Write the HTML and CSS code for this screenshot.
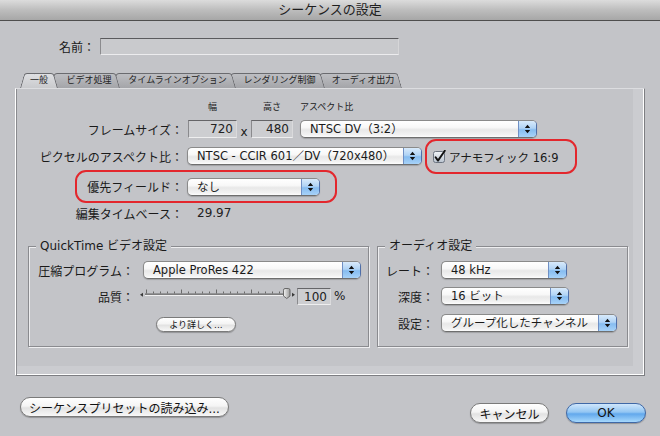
FILE: index.html
```html
<!DOCTYPE html>
<html lang="ja">
<head>
<meta charset="utf-8">
<title>シーケンスの設定</title>
<link rel="stylesheet" href="styles.css">
</head>
<body>
<div class="titlebar">シーケンスの設定</div>

<div class="name-row">
  <span class="name-label">名前：</span>
  <div class="name-field"></div>
</div>

<div class="tabs">
  <div class="tab selected t1">一般</div>
  <div class="tab t2">ビデオ処理</div>
  <div class="tab t3">タイムラインオプション</div>
  <div class="tab t4">レンダリング制御</div>
  <div class="tab t5">オーディオ出力</div>
</div>

<div class="panel">
  <div class="content">
    <div class="head-row">
      <span class="h-spacer"></span>
      <span class="h-w">幅</span>
      <span class="h-h">高さ</span>
      <span class="h-a">アスペクト比</span>
    </div>

    <div class="row">
      <span class="label">フレームサイズ：</span>
      <div class="numfield f720">720</div>
      <span class="times">x</span>
      <div class="numfield f480">480</div>
      <div class="popup p-aspect">
        <span class="ptext">NTSC DV（3:2）</span>
        <span class="parrows"><svg width="7" height="10" viewBox="0 0 7 10"><path d="M3.5 0.8 L6.2 4 L0.8 4 Z M0.8 6 L6.2 6 L3.5 9.2 Z" fill="#111"/></svg></span>
      </div>
    </div>

    <div class="row row-pixel">
      <span class="label">ピクセルのアスペクト比：</span>
      <div class="popup p-pixel">
        <span class="ptext">NTSC - CCIR 601／DV（720x480）</span>
        <span class="parrows"><svg width="7" height="10" viewBox="0 0 7 10"><path d="M3.5 0.8 L6.2 4 L0.8 4 Z M0.8 6 L6.2 6 L3.5 9.2 Z" fill="#111"/></svg></span>
      </div>
      <div class="mark anamorphic">
        <svg class="checkbox" width="14" height="14" viewBox="0 0 14 14">
          <defs><linearGradient id="cbg" x1="0" y1="0" x2="0" y2="1"><stop offset="0" stop-color="#f2f5f9"/><stop offset="1" stop-color="#b9c3cf"/></linearGradient></defs>
          <rect x="0.5" y="1.5" width="11" height="11" rx="2" fill="url(#cbg)" stroke="#6c7480"/>
          <path d="M2.6 7.2 L5 10.6 L11.8 0.8" stroke="#111" stroke-width="1.9" fill="none" stroke-linecap="round" stroke-linejoin="round"/>
        </svg>
        <span class="cblabel">アナモフィック 16:9</span>
      </div>
    </div>

    <div class="mark priority">
      <span class="label plabel">優先フィールド：</span>
      <div class="popup p-priority">
        <span class="ptext">なし</span>
        <span class="parrows"><svg width="7" height="10" viewBox="0 0 7 10"><path d="M3.5 0.8 L6.2 4 L0.8 4 Z M0.8 6 L6.2 6 L3.5 9.2 Z" fill="#111"/></svg></span>
      </div>
    </div>

    <div class="row row-tb">
      <span class="label">編集タイムベース：</span>
      <span class="tbvalue">29.97</span>
    </div>

    <div class="groups">
      <div class="group qt">
        <div class="gtitle">QuickTime ビデオ設定</div>
        <div class="grow g-comp">
          <span class="glabel qlabel">圧縮プログラム：</span>
          <div class="popup p-comp">
            <span class="ptext">Apple ProRes 422</span>
            <span class="parrows"><svg width="7" height="10" viewBox="0 0 7 10"><path d="M3.5 0.8 L6.2 4 L0.8 4 Z M0.8 6 L6.2 6 L3.5 9.2 Z" fill="#111"/></svg></span>
          </div>
        </div>
        <div class="grow g-quality">
          <span class="glabel qlabel">品質：</span>
          <svg class="slider" width="158" height="18" viewBox="0 0 158 18">
            <defs><linearGradient id="thg" x1="0" y1="0" x2="1" y2="0"><stop offset="0" stop-color="#f4f4f4"/><stop offset="1" stop-color="#9a9a9a"/></linearGradient></defs>
            <path d="M2 7.8 L5 5.8 L5 9.8 Z" fill="#3a3a3a"/>
            <rect x="7" y="6.5" width="142" height="1.4" fill="#666"/>
            <rect x="7" y="7.9" width="142" height="1" fill="#f6f6f6"/>
            <g fill="#6a6a6a">
              <rect x="8" y="2.5" width="1" height="4"/>
              <rect x="15" y="4.5" width="1" height="2"/>
              <rect x="22" y="4.5" width="1" height="2"/>
              <rect x="29" y="4.5" width="1" height="2"/>
              <rect x="36" y="4.5" width="1" height="2"/>
              <rect x="43" y="2.5" width="1" height="4"/>
              <rect x="50" y="4.5" width="1" height="2"/>
              <rect x="57" y="4.5" width="1" height="2"/>
              <rect x="64" y="4.5" width="1" height="2"/>
              <rect x="71" y="4.5" width="1" height="2"/>
              <rect x="78" y="2.5" width="1" height="4"/>
              <rect x="85" y="4.5" width="1" height="2"/>
              <rect x="92" y="4.5" width="1" height="2"/>
              <rect x="99" y="4.5" width="1" height="2"/>
              <rect x="106" y="4.5" width="1" height="2"/>
              <rect x="113" y="2.5" width="1" height="4"/>
              <rect x="120" y="4.5" width="1" height="2"/>
              <rect x="127" y="4.5" width="1" height="2"/>
              <rect x="134" y="4.5" width="1" height="2"/>
              <rect x="141" y="4.5" width="1" height="2"/>
            </g>
            <path d="M145.5 3.2 Q145.5 1.5 147 1.5 L150.5 1.5 Q152 1.5 152 3.2 L152 9 L148.75 11.5 L145.5 9 Z" fill="url(#thg)" stroke="#5e5e5e" stroke-width="0.9"/>
            <path d="M157 7.8 L154 5.8 L154 9.8 Z" fill="#3a3a3a"/>
          </svg>
          <div class="numfield f100">100</div>
          <span class="pct">%</span>
        </div>
        <div class="grow g-more">
          <div class="btn small">より詳しく...</div>
        </div>
      </div>

      <div class="group audio">
        <div class="gtitle">オーディオ設定</div>
        <div class="grow a1">
          <span class="glabel alabel">レート：</span>
          <div class="popup p-rate">
            <span class="ptext">48 kHz</span>
            <span class="parrows"><svg width="7" height="10" viewBox="0 0 7 10"><path d="M3.5 0.8 L6.2 4 L0.8 4 Z M0.8 6 L6.2 6 L3.5 9.2 Z" fill="#111"/></svg></span>
          </div>
        </div>
        <div class="grow a2">
          <span class="glabel alabel">深度：</span>
          <div class="popup p-depth">
            <span class="ptext">16 ビット</span>
            <span class="parrows"><svg width="7" height="10" viewBox="0 0 7 10"><path d="M3.5 0.8 L6.2 4 L0.8 4 Z M0.8 6 L6.2 6 L3.5 9.2 Z" fill="#111"/></svg></span>
          </div>
        </div>
        <div class="grow a3">
          <span class="glabel alabel">設定：</span>
          <div class="popup p-config">
            <span class="ptext">グループ化したチャンネル</span>
            <span class="parrows"><svg width="7" height="10" viewBox="0 0 7 10"><path d="M3.5 0.8 L6.2 4 L0.8 4 Z M0.8 6 L6.2 6 L3.5 9.2 Z" fill="#111"/></svg></span>
          </div>
        </div>
      </div>
    </div>
  </div>
</div>

<div class="bottom">
  <div class="btn preset">シーケンスプリセットの読み込み...</div>
  <div class="right-buttons">
    <div class="btn cancel">キャンセル</div>
    <div class="btn ok">OK</div>
  </div>
</div>
</body>
</html>
```

FILE: styles.css
```css
* { box-sizing: border-box; }
html, body { margin: 0; padding: 0; }
body {
  width: 660px;
  height: 436px;
  overflow: hidden;
  background: #c3c4c8;
  font-family: "DejaVu Sans", "Noto Sans CJK JP", sans-serif;
  font-size: 12px;
  color: #1a1a1a;
}

/* title bar */
.titlebar {
  height: 21px;
  line-height: 20px;
  text-align: center;
  font-size: 13px;
  color: #1e1e1e;
  background: linear-gradient(#dcdcdc, #bdbdbd 50%, #a7a7a7);
  border-bottom: 1px solid #4e4e4e;
}

/* name */
.name-row {
  display: flex;
  align-items: center;
  height: 17px;
  margin-top: 17px;
}
.name-label { width: 95px; text-align: right; }
.name-field {
  margin-left: 5px;
  width: 299px;
  height: 17px;
  background: #c9cacd;
  border: 1px solid #8b8b8e;
  border-top-color: #5a5a5d;
  border-bottom-color: #ececee;
  border-right-color: #d6d6d8;
}

/* tabs */
.tabs {
  display: flex;
  height: 15px;
  margin-top: 18px;
  margin-left: 20px;
}
.tab {
  position: relative;
  height: 15px;
  line-height: 15px;
  font-size: 9px;
  color: #1e1e1e;
  text-align: center;
  padding-left: 8px;
  margin-left: -8px;
  white-space: nowrap;
}
.tab::before,
.tab::after {
  content: "";
  position: absolute;
  top: 0;
  bottom: 0;
  width: 50%;
  z-index: -1;
  border-top: 1px solid #6a6b6f;
  background: linear-gradient(#bdbec2, #a4a5a9);
}
.tab::before {
  left: 0;
  border-left: 1px solid #6a6b6f;
  border-top-left-radius: 3px;
  transform: skewX(-16deg);
  transform-origin: bottom left;
}
.tab::after {
  right: 0;
  border-right: 1px solid #6a6b6f;
  border-top-right-radius: 3px;
  transform: skewX(16deg);
  transform-origin: bottom right;
}
.tab.selected::before,
.tab.selected::after { background: linear-gradient(#dedfe2, #c9cacd); }
.t1 { width: 38px; margin-left: 0; padding-left: 0; z-index: 10; }
.t2 { width: 70px; z-index: 5; }
.t3 { width: 123px; z-index: 4; }
.t4 { width: 97px; z-index: 3; }
.t5 { width: 86px; z-index: 2; }

/* panel */
.panel {
  margin-left: 15px;
  width: 630px;
  height: 288px;
  background: #cbccd0;
  border-top: 1px solid #dcdde0;
  border-left: 1px solid #ffffff;
  border-right: 1px solid #7d7e82;
  border-bottom: 1px solid #7d7e82;
  box-shadow: inset 1px 0 0 #8a8b8f, inset -1px -1px 0 #ffffff;
  padding: 0 11px 9px 1px;
}
.content {
  height: 100%;
  background: #c3c4c8;
  display: flex;
  flex-direction: column;
  align-items: flex-start;
}

.head-row {
  display: flex;
  height: 11px;
  line-height: 11px;
  margin-top: 13px;
  font-size: 9px;
}
.h-spacer { width: 171px; }
.h-w { width: 49px; text-align: center; }
.h-h { width: 42px; margin-left: 14px; text-align: center; }
.h-a { margin-left: 7px; }

.row {
  display: flex;
  align-items: center;
  height: 18px;
  margin-top: 7px;
}
.row-pixel { margin-top: 9px; }
.label {
  width: 166px;
  text-align: right;
  white-space: nowrap;
}

.numfield {
  height: 18px;
  background: #cdced1;
  border: 1px solid #8a8a8d;
  border-top-color: #656568;
  border-right-color: #dadadc;
  border-bottom-color: #eeeeef;
  text-align: right;
  padding-right: 3px;
  line-height: 16px;
  font-size: 12px;
  color: #222;
}
.f720 { width: 49px; margin-left: 5px; }
.f480 { width: 42px; }
.times {
  width: 14px;
  text-align: center;
  line-height: 12px;
  align-self: flex-end;
}

/* popup buttons */
.popup {
  display: flex;
  height: 18px;
  border: 1px solid #8a8a8a;
  border-bottom-color: #6e6e6e;
  border-right-color: #4f6ea8;
  border-radius: 5px;
  overflow: hidden;
  background: linear-gradient(#ffffff 0%, #f8f8f8 40%, #e8e8e8 55%, #f2f2f2 85%, #fdfdfd 100%);
  box-shadow: 0 1px 1px rgba(0, 0, 0, 0.18);
  font-size: 11.5px;
  color: #1a1a1a;
}
.ptext {
  flex: 1;
  padding-left: 9px;
  line-height: 16px;
  white-space: nowrap;
  overflow: hidden;
}
.parrows {
  width: 18px;
  display: flex;
  align-items: center;
  justify-content: center;
  background: linear-gradient(#d8eafb, #b0d3f5 45%, #86bcf0 55%, #a7d2f8);
  border-left: 1px solid #6f8fc4;
}
.p-aspect { width: 237px; margin-left: 7px; }
.p-pixel { width: 235px; margin-left: 4px; }
.p-priority { width: 133px; margin-left: 4px; }
.p-comp { width: 218px; margin-left: 9px; }
.p-rate { width: 126px; margin-left: 7px; }
.p-depth { width: 128px; margin-left: 7px; }
.p-config { width: 176px; margin-left: 7px; }

/* red annotation frames */
.mark {
  border: 2px solid #e3272d;
  border-radius: 11px;
  display: flex;
  align-items: center;
}
.anamorphic {
  width: 152px;
  height: 35px;
  margin: -8px 0 -9px 3px;
  padding-left: 6px;
}
.checkbox { flex: none; }
.cblabel { margin-left: 2px; white-space: nowrap; font-size: 11.5px; }
.priority {
  width: 262px;
  height: 33px;
  margin-top: 5px;
  margin-left: 58px;
}
.plabel { width: 106px; }

.row-tb {
  height: 14px;
  margin-top: 3px;
}
.tbvalue { margin-left: 14px; color: #222; }

/* group boxes */
.groups {
  display: flex;
  margin-top: 26px;
  margin-left: 11px;
  gap: 8px;
}
.group {
  height: 101px;
  border: 1px solid #8a8b8f;
  box-shadow: inset 1px 1px 0 #eeeef0, 1px 1px 0 #eeeef0;
  display: flex;
  flex-direction: column;
  align-items: flex-start;
}
.qt { width: 341px; }
.audio { width: 251px; }
.gtitle {
  margin: -8px 0 0 7px;
  padding: 0 4px;
  line-height: 14px;
  background: #c3c4c8;
  white-space: nowrap;
}
.grow {
  display: flex;
  align-items: center;
  height: 18px;
}
.glabel { text-align: right; white-space: nowrap; }
.qlabel { width: 105px; }
.alabel { width: 56px; }
.g-comp { margin-top: 8px; }
.g-quality { margin-top: 8px; }
.slider { margin-left: 4px; flex: none; }
.f100 { width: 34px; height: 17px; margin-left: 1px; }
.pct { margin-left: 3px; }
.g-more { margin-top: 12px; height: 15px; padding-left: 127px; }
.a1 { margin-top: 8px; }
.a2 { margin-top: 8px; }
.a3 { margin-top: 9px; }

/* push buttons */
.btn {
  display: flex;
  align-items: center;
  justify-content: center;
  height: 20px;
  border: 1px solid #7a7a7a;
  border-radius: 10px;
  background: linear-gradient(#ffffff, #f4f4f4 45%, #e2e2e2 55%, #f8f8f8);
  box-shadow: 0 1px 1px rgba(0, 0, 0, 0.25);
  font-size: 12px;
  color: #111;
  white-space: nowrap;
}
.btn.small {
  width: 80px;
  height: 15px;
  font-size: 9px;
  border-radius: 8px;
}

.bottom {
  display: flex;
  justify-content: space-between;
  align-items: flex-start;
  padding: 0 14px 0 20px;
}
.preset { width: 209px; margin-top: 21px; }
.right-buttons {
  display: flex;
  gap: 17px;
  margin-top: 27px;
}
.cancel { width: 79px; }
.ok {
  width: 80px;
  border-color: #3f68a6;
  background: linear-gradient(#cfe6fb, #93c6f3 45%, #62a8ec 55%, #a6d8fc);
}
```
